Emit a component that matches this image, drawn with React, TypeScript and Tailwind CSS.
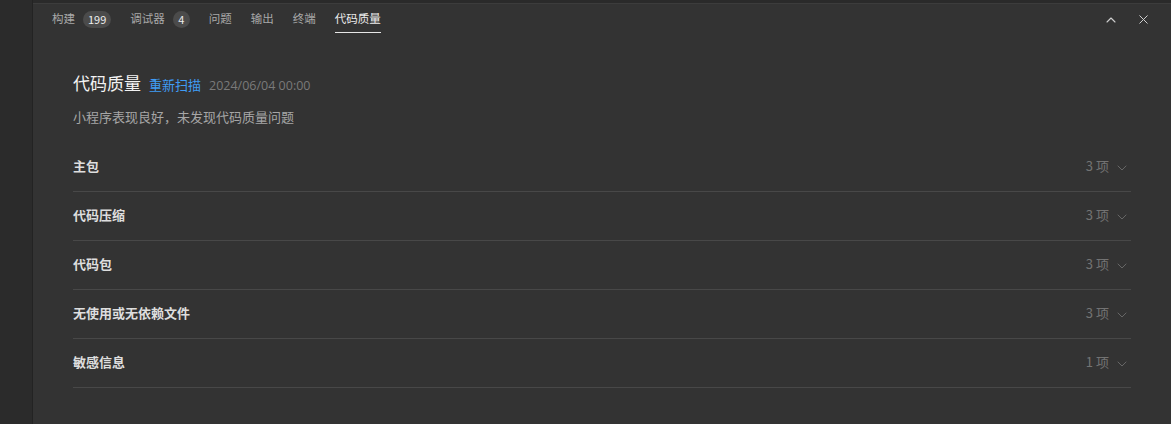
import { ChevronDown, ChevronUp, X } from 'lucide-react';

const tabs = [
  { label: '构建', badge: '199' },
  { label: '调试器', badge: '4' },
  { label: '问题' },
  { label: '输出' },
  { label: '终端' },
  { label: '代码质量', active: true },
];

const groups = [
  { name: '主包', count: 3 },
  { name: '代码压缩', count: 3 },
  { name: '代码包', count: 3 },
  { name: '无使用或无依赖文件', count: 3 },
  { name: '敏感信息', count: 1 },
];

export default function App() {
  return (
    <div
      className="flex h-[424px] w-[1171px] bg-[#2a2a2a] text-[#cccccc]"
      style={{ fontFamily: '"Noto Sans CJK SC", "Noto Sans", sans-serif' }}
    >
      {/* Left rail */}
      <div className="w-[33px] shrink-0 border-r border-[#232323] bg-[#2b2b2b]" />

      <div className="flex flex-1 flex-col pt-[3px]">
        <div className="flex flex-1 flex-col border-t border-[#3c3c3c] bg-[#333333]">
          {/* Tab bar */}
          <div className="flex h-[29px] items-stretch pl-[19px] pr-[20px]">
            <div className="flex items-stretch gap-[19px]">
              {tabs.map((t) => (
                <div
                  key={t.label}
                  className={`flex items-center gap-[8px] pt-[2px] text-[11.5px] ${
                    t.active ? 'border-b border-[#e6e6e6] text-[#ececec]' : 'border-b border-transparent text-[#a8a8a8]'
                  }`}
                >
                  <span>{t.label}</span>
                  {t.badge && (
                    <span className="flex h-[17px] min-w-[17px] items-center justify-center rounded-full bg-[#4b4b4b] px-[5px] text-[11px] text-[#eeeeee]">
                      {t.badge}
                    </span>
                  )}
                </div>
              ))}
            </div>
            <div className="ml-auto flex items-center gap-[17px] pt-[2px] text-[#cfcfcf]">
              <ChevronUp size={16} strokeWidth={1.6} />
              <X size={15} strokeWidth={1.6} />
            </div>
          </div>

          {/* Content */}
          <div className="pl-[40px] pr-[40px] pt-[37px]">
            <div className="flex items-baseline gap-[8px]">
              <h1 className="text-[17px] text-[#f2f2f2]">代码质量</h1>
              <span className="text-[13px] text-[#3f9cf5]">重新扫描</span>
              <span className="text-[12.5px] text-[#7a7a7a]" style={{ fontFamily: '"Open Sans", "Noto Sans", sans-serif' }}>
                2024/06/04 00:00
              </span>
            </div>
            <p className="mt-[11px] text-[13px] text-[#a6a6a6]">小程序表现良好，未发现代码质量问题</p>

            <div className="mt-[17px]">
              {groups.map((g) => (
                <div
                  key={g.name}
                  className="flex h-[49px] items-center justify-between border-b border-[#484848] pb-[3px]"
                >
                  <span className="text-[13px] font-bold text-[#dedede]">{g.name}</span>
                  <span className="flex items-center gap-[5px] text-[13px] text-[#737373]">
                    {g.count} 项
                    <ChevronDown size={16} strokeWidth={1.2} className="relative top-[2px] mr-[1px]" />
                  </span>
                </div>
              ))}
            </div>
          </div>
        </div>
      </div>
    </div>
  );
}
